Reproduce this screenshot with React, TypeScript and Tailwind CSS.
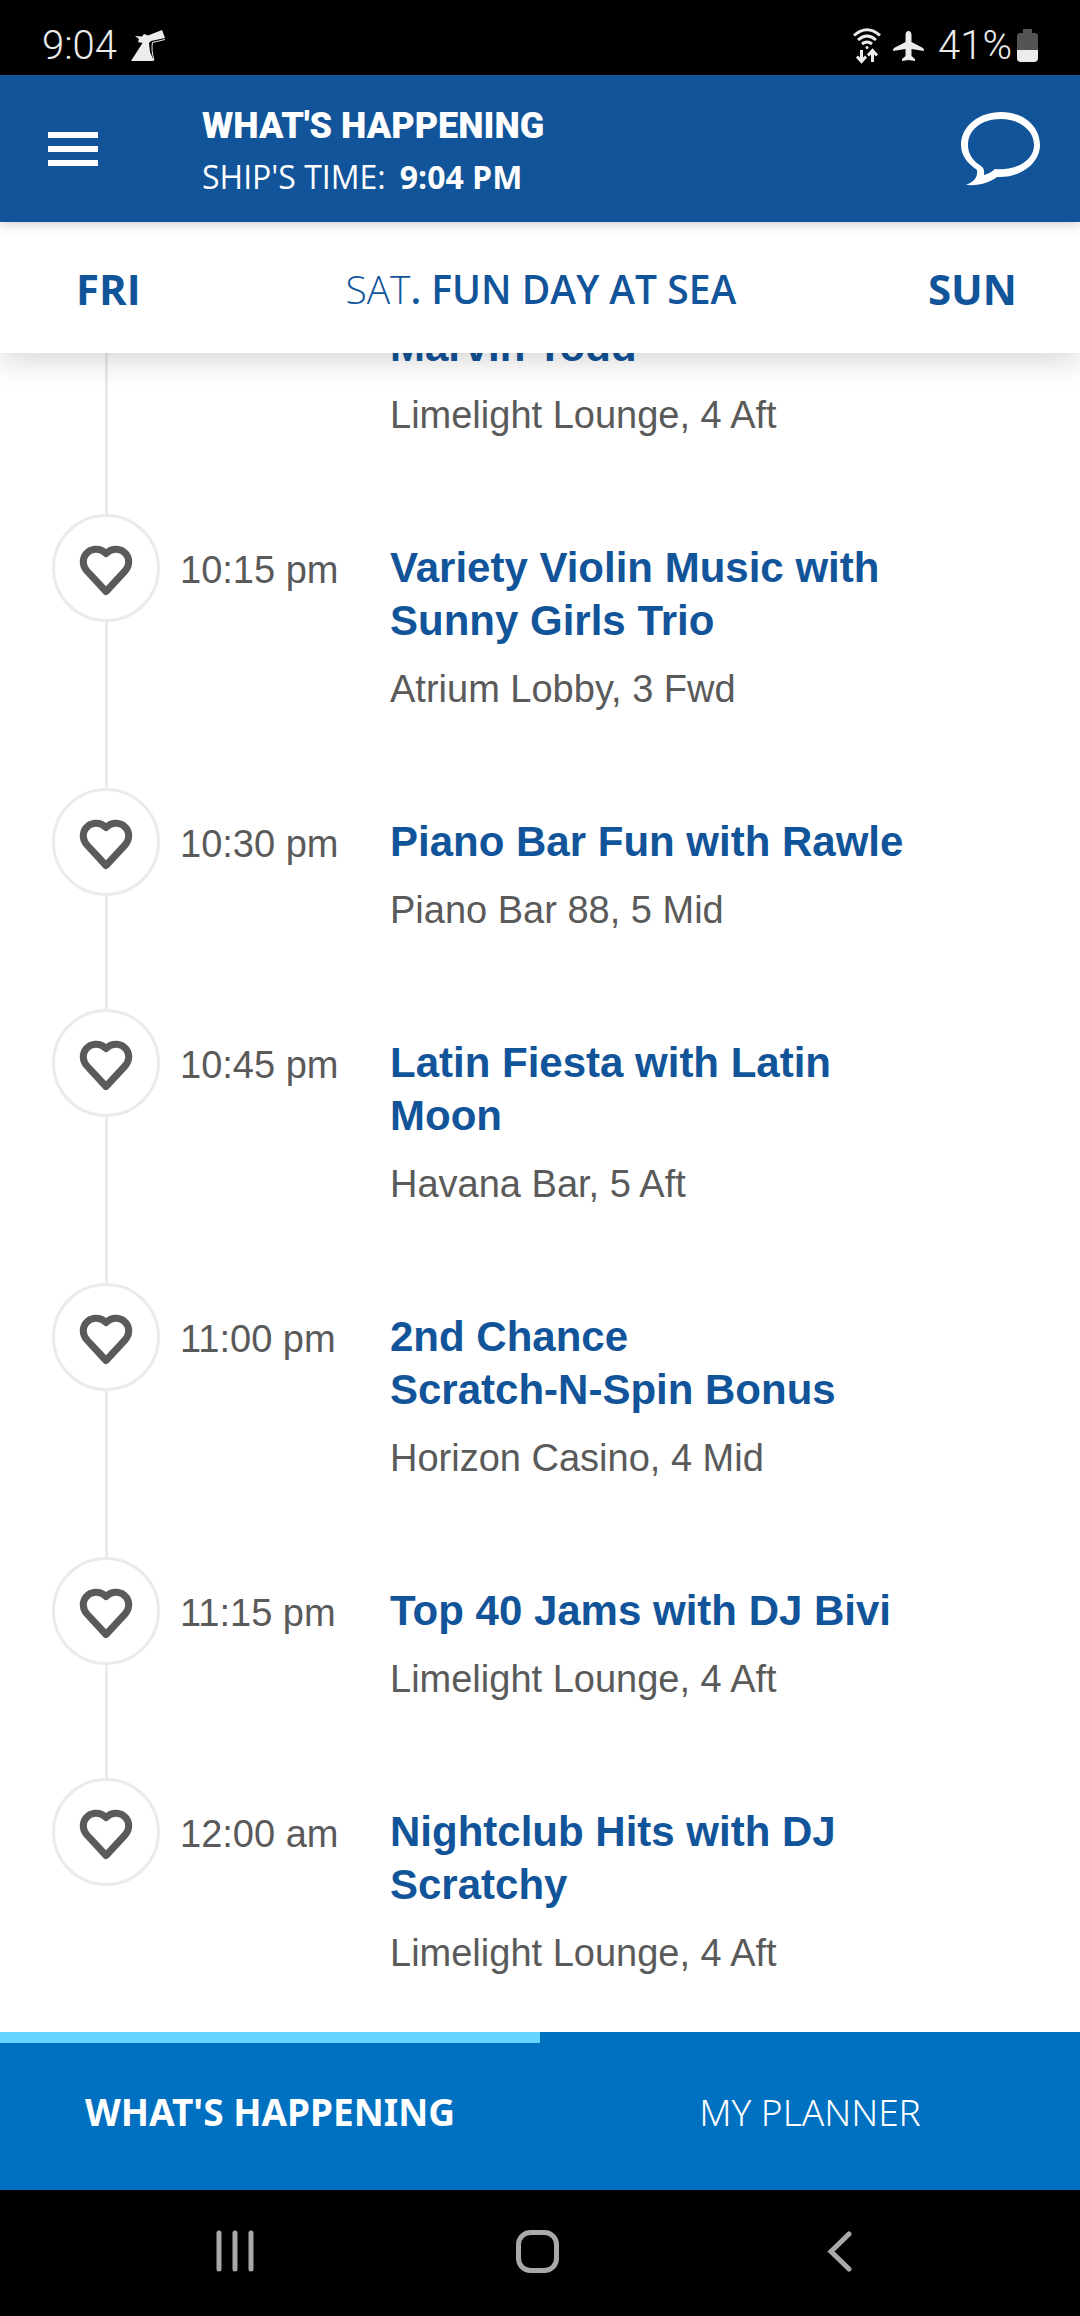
import { useState } from "react";

type Activity = {
  time: string;
  title: string;
  place: string;
};

const activities: Activity[] = [
  { time: "10:15 pm", title: "Variety Violin Music with Sunny Girls Trio", place: "Atrium Lobby, 3 Fwd" },
  { time: "10:30 pm", title: "Piano Bar Fun with Rawle", place: "Piano Bar 88, 5 Mid" },
  { time: "10:45 pm", title: "Latin Fiesta with Latin Moon", place: "Havana Bar, 5 Aft" },
  { time: "11:00 pm", title: "2nd Chance Scratch\u2011N\u2011Spin Bonus", place: "Horizon Casino, 4 Mid" },
  { time: "11:15 pm", title: "Top 40 Jams with DJ Bivi", place: "Limelight Lounge, 4 Aft" },
  { time: "12:00 am", title: "Nightclub Hits with DJ Scratchy", place: "Limelight Lounge, 4 Aft" },
];

function StatusBar() {
  return (
    <div className="flex h-[75px] items-center justify-between bg-black px-[42px] pt-[16px] font-['Roboto',sans-serif] text-[40px] font-light leading-[44px] text-[#ececec]">
      <div className="flex items-center gap-[14px]">
        <span>9:04</span>
        <svg width="35" height="32" viewBox="0 0 35 32" fill="currentColor" aria-hidden="true">
          <path d="M4 6 11 6.500 13 4 17 5.500 31 0 34 8 20 11 18 13 19 22 23 31H0L11.500 13 7 12 8 9Z" />
          <path d="M34 9.500 21.500 12.500Q20 20 23 30" fill="none" stroke="currentColor" strokeWidth="1" />
        </svg>
      </div>
      <div className="flex items-center">
        <svg className="mr-[12px]" width="28" height="36" viewBox="0 0 28 36" fill="none" stroke="currentColor" strokeWidth="3" aria-hidden="true">
          <path d="M1 7.500Q14-4 27 7.500M5 12Q14 4 23 12M9 16Q14 12 19 16" />
          <circle cx="14" cy="19.500" r="1.500" fill="currentColor" stroke="none" />
          <path d="M8.500 22V33M4 28.500 8.500 33.500 13 28.500M19.500 34V23M15 27.500 19.500 22.500 24 27.500" />
        </svg>
        <svg className="mr-[14px]" width="31" height="30" viewBox="0 0 31 30" fill="currentColor" aria-hidden="true">
          <path d="M15.500 0C17.500 0 18.500 2 18.500 4V11L30 17Q31 18 31 20L18.500 18V25L22 28V30L15.500 29 9 30V28L12.500 25V18L0 20Q0 18 1 17L12.500 11V4C12.500 2 13.500 0 15.500 0Z" />
        </svg>
        <span className="mr-[5px]">41%</span>
        <svg width="21" height="33" viewBox="0 0 21 33" aria-hidden="true">
          <path d="M6 0H15V4H18Q21 4 21 7V21H0V7Q0 4 3 4H6Z" fill="#545454" />
          <path d="M0 21H21V29Q21 33 17 33H4Q0 33 0 29Z" fill="currentColor" />
        </svg>
      </div>
    </div>
  );
}

function Header() {
  return (
    <header className="relative z-20 flex h-[147px] items-center bg-[#115499] pl-[48px] pr-[40px] text-white shadow-[0_2px_12px_rgba(0,0,0,0.2)]">
      <button type="button" aria-label="Open menu" className="mr-[104px]">
        <svg width="50" height="34" viewBox="0 0 50 34" fill="currentColor">
          <path d="M0 0H50V6H0ZM0 14H50V20H0ZM0 28H50V34H0Z" />
        </svg>
      </button>
      <div className="flex-1">
        <h1 className="font-['Roboto',sans-serif] text-[36px] font-black leading-[56px]">WHAT'S HAPPENING</h1>
        <p className="flex gap-[14px] font-['Open_Sans',sans-serif] text-[32px] leading-[46px]">
          <span>SHIP'S TIME:</span>
          <strong>9:04 PM</strong>
        </p>
      </div>
      <button type="button" aria-label="Open chat">
        <svg width="79" height="74" viewBox="0 0 79 74" fill="currentColor" fillRule="evenodd">
          <path d="M5 73C13 70 17 65 16 58C6 51 0 43 0 33C0 14 18 0 40 0C62 0 79 14 79 33C79 51 60 66 36 65C29 70 20 74 5 73ZM23 63C27 62 31 60 34 57C56 59 73 48 73 33C73 18 58 7 40 7C20 7 7 18 7 33C7 42 12 49 20 54C24 57 23 60 23 63Z" />
        </svg>
      </button>
    </header>
  );
}

function DayPicker() {
  return (
    <nav className="relative z-10 flex h-[131px] items-center justify-between bg-white px-[63px] pt-[2px] font-['Open_Sans',sans-serif] text-[42px] leading-[56px] text-[#115499] shadow-[0_4px_32px_rgba(0,0,0,0.2)]">
      <button type="button" className="px-[13px] font-bold">FRI</button>
      <h2 className="text-[39px] font-semibold">
        <span className="font-light">SAT</span>. FUN DAY AT SEA
      </h2>
      <button type="button" className="font-bold">SUN</button>
    </nav>
  );
}

function ActivityRow({ activity, last }: { activity: Activity; last: boolean }) {
  const [saved, setSaved] = useState(false);

  return (
    <li className="flex">
      <div className="mr-[20px] flex w-[108px] flex-col items-center">
        <button
          type="button"
          aria-label={`Save ${activity.title}`}
          aria-pressed={saved}
          onClick={() => setSaved(!saved)}
          className="flex size-[108px] shrink-0 items-center justify-center rounded-full border-3 border-[#ebebeb] bg-white text-[#5a5a5a]"
        >
          <svg className="mt-[6px]" width="54" height="52" viewBox="0 0 54 52" fill={saved ? "currentColor" : "none"} stroke="currentColor" strokeWidth="7" strokeLinejoin="round">
            <path d="M27 8.500C20 1.500 11 4 7 9C3 14 3.500 21 8 26L27 46.500 46 26C50.500 21 51 14 47 9C43 4 34 1.500 27 8.500Z" />
          </svg>
        </button>
        {!last && <div className="w-[3px] flex-1 bg-[#ebebeb]" />}
      </div>
      <time className="w-[210px] pt-[34px] text-[38px] leading-[44px]">{activity.time}</time>
      <div className={last ? "max-w-[540px] flex-1 pb-[40px] pt-[27px]" : "max-w-[540px] flex-1 pb-[77px] pt-[27px]"}>
        <h3 className="text-[42px] font-bold leading-[53px] text-[#115499]">{activity.title}</h3>
        <p className="pt-[20px] text-[38px] leading-[44px]">{activity.place}</p>
      </div>
    </li>
  );
}

function Schedule() {
  return (
    <ol className="flex-1 overflow-hidden bg-white pl-[52px] font-['Liberation_Sans',sans-serif] text-[#5a5a5a]">
      <li className="-mt-[33px] flex">
        <div className="mr-[230px] flex w-[108px] justify-center">
          <div className="w-[3px] bg-[#ebebeb]" />
        </div>
        <div className="pb-[77px]">
          <h3 className="text-[42px] font-bold leading-[53px] text-[#115499]">Marvin Todd</h3>
          <p className="pt-[20px] text-[38px] leading-[44px]">Limelight Lounge, 4 Aft</p>
        </div>
      </li>
      {activities.map((activity, i) => (
        <ActivityRow key={activity.time} activity={activity} last={i === activities.length - 1} />
      ))}
    </ol>
  );
}

function BottomTabs() {
  return (
    <nav className="grid h-[158px] shrink-0 grid-cols-2 bg-[#0070c0] font-['Noto_Sans',sans-serif] text-[37px] text-white">
      <button type="button" aria-current="page" className="border-t-[11px] border-[#66d5ff] pb-[10px] font-bold">
        WHAT'S HAPPENING
      </button>
      <button type="button" className="border-t-[11px] border-transparent pb-[10px] font-light">
        MY PLANNER
      </button>
    </nav>
  );
}

function SystemNav() {
  return (
    <nav className="grid h-[126px] shrink-0 grid-cols-3 place-items-center bg-black pb-[4px] pl-[84px] pr-[90px] text-[#a9a9a9]">
      <button type="button" aria-label="Recent apps">
        <svg width="38" height="42" viewBox="0 0 38 42" fill="none" stroke="currentColor" strokeWidth="5" strokeLinecap="round">
          <path d="M3 3V39M19 3V39M35 3V39" />
        </svg>
      </button>
      <button type="button" aria-label="Home">
        <svg width="43" height="43" viewBox="0 0 43 43" fill="none" stroke="currentColor" strokeWidth="5">
          <rect x="2.500" y="2.500" width="38" height="38" rx="12" />
        </svg>
      </button>
      <button type="button" aria-label="Back">
        <svg width="25" height="41" viewBox="0 0 25 41" fill="none" stroke="currentColor" strokeWidth="5" strokeLinecap="round">
          <path d="M22 3 4 20.500 22 38" />
        </svg>
      </button>
    </nav>
  );
}

export default function App() {
  return (
    <div className="flex min-h-screen flex-col bg-white">
      <StatusBar />
      <Header />
      <DayPicker />
      <Schedule />
      <BottomTabs />
      <SystemNav />
    </div>
  );
}
